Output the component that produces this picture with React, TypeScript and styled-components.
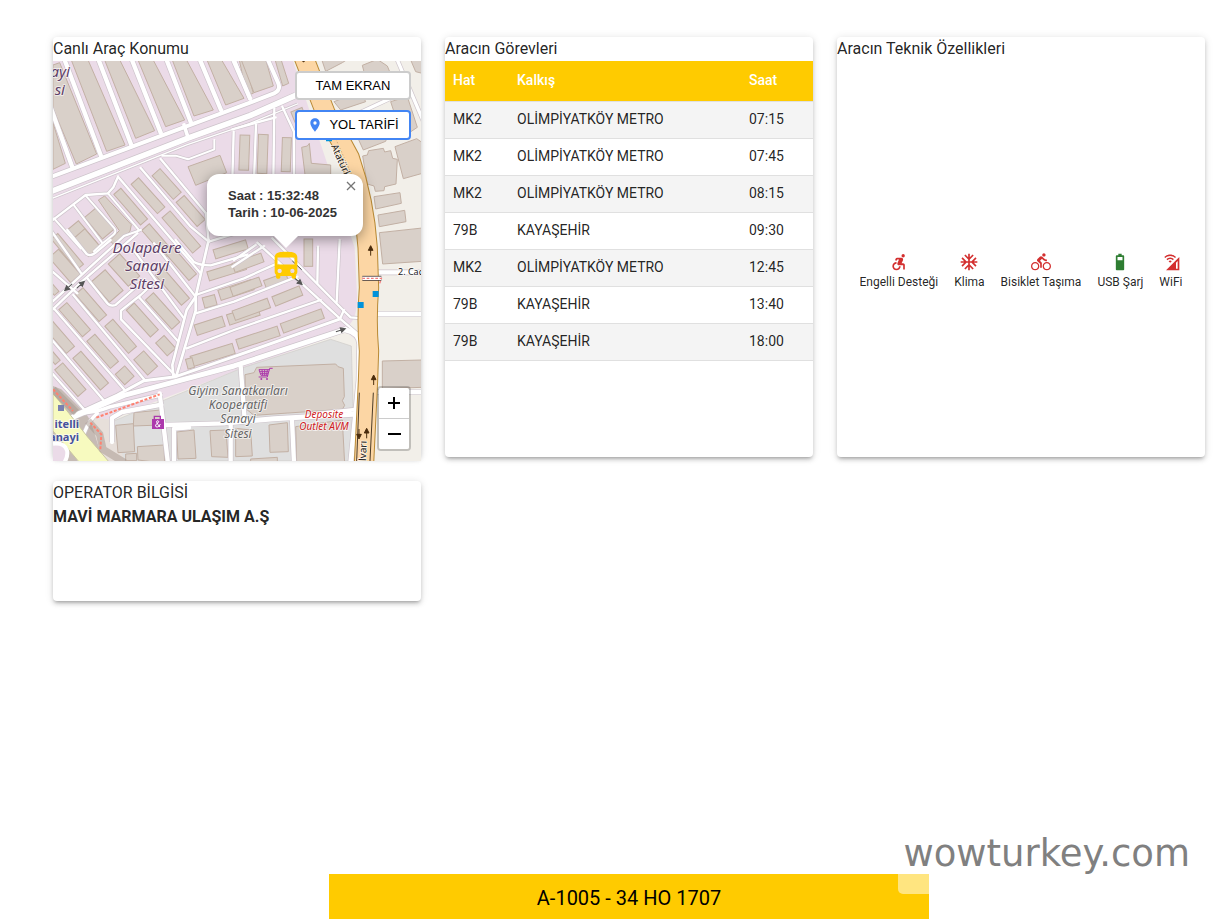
import React from 'react';
import styled, { createGlobalStyle } from 'styled-components';
import {
  MdAccessibleForward,
  MdAcUnit,
  MdDirectionsBike,
  MdCellWifi,
  MdDirectionsBus,
  MdLocationOn,
} from 'react-icons/md';

const GlobalStyle = createGlobalStyle`
  *, *::before, *::after { box-sizing: border-box; }
  body {
    margin: 0;
    background: #fff;
    color: rgba(0, 0, 0, 0.87);
    font-family: Roboto, "Liberation Sans", sans-serif;
    font-size: 16px;
    line-height: 24px;
  }
`;

const Page = styled.div`
  position: relative;
  display: flex;
  flex-direction: column;
  min-height: 100vh;
  padding: 37px 13px 0 53px;
`;

const Cards = styled.main`
  display: grid;
  grid-template-columns: repeat(3, minmax(0, 1fr));
  align-items: start;
  gap: 24px;
  margin-bottom: 24px;
`;

const Card = styled.section<{ $height: number }>`
  display: flex;
  flex-direction: column;
  height: ${(p) => p.$height}px;
  background: #fff;
  border-radius: 4px;
  box-shadow: 0 3px 3px -2px rgba(0, 0, 0, 0.2), 0 3px 4px 0 rgba(0, 0, 0, 0.14),
    0 1px 8px 0 rgba(0, 0, 0, 0.12);
`;

const CardTitle = styled.h2`
  margin: 0;
  font-size: 16px;
  line-height: 24px;
  font-weight: 400;
`;

const Operator = styled.strong`
  font-weight: 700;
`;

/* ---------- map ---------- */

const MapBox = styled.div`
  position: relative;
  flex: none;
  height: 400px;
  overflow: hidden;
  font-family: "Liberation Sans", Arial, sans-serif;
`;

const MapDrawing = styled.svg`
  display: block;
  width: 100%;
  height: 100%;
`;

const MapActions = styled.div`
  position: absolute;
  top: 10px;
  right: 10px;
  display: flex;
  flex-direction: column;
  gap: 10px;
  width: 116px;
`;

const MapButton = styled.button<{ $primary?: boolean }>`
  display: flex;
  align-items: center;
  justify-content: center;
  gap: 6px;
  height: ${(p) => (p.$primary ? 30 : 29)}px;
  padding: 0;
  border: 2px solid ${(p) => (p.$primary ? '#4285f4' : '#ccc')};
  border-radius: 4px;
  background: #fff;
  color: #000;
  font-family: inherit;
  font-size: 13px;
  line-height: 16px;
  cursor: pointer;

  svg {
    color: #4285f4;
  }
`;

const Zoom = styled.div`
  position: absolute;
  right: 10px;
  bottom: 10px;
  width: 34px;
  border: 2px solid rgba(0, 0, 0, 0.2);
  border-radius: 4px;
  background-clip: padding-box;
`;

const ZoomButton = styled.button`
  display: flex;
  align-items: center;
  justify-content: center;
  width: 30px;
  height: 30px;
  padding: 0;
  border: 0;
  background: #fff;
  color: #000;
  cursor: pointer;

  &:first-child {
    height: 31px;
    border-bottom: 1px solid #ccc;
    border-radius: 2px 2px 0 0;
  }
  &:last-child {
    border-radius: 0 0 2px 2px;
  }
`;

const Marker = styled.div`
  position: absolute;
  top: 188px;
  left: calc(50% + 32px);
  height: 34px;
  color: #ffcb00;
`;

const Popup = styled.div`
  position: absolute;
  top: 113px;
  left: calc(50% - 30px);
  width: 156px;
  height: 62px;
  padding: 13px 21px;
  border-radius: 12px;
  background: #fff;
  box-shadow: 0 3px 14px rgba(0, 0, 0, 0.4);
  color: #333;
  font-size: 13px;
  line-height: 17px;
  font-weight: 700;
  white-space: nowrap;
`;

const PopupTip = styled.svg`
  position: absolute;
  top: 174px;
  left: calc(50% + 35px);
`;

const PopupClose = styled.button`
  position: absolute;
  top: 0;
  right: 0;
  width: 24px;
  height: 24px;
  padding: 0;
  border: 0;
  background: none;
  color: #757575;
  line-height: 0;
  cursor: pointer;
`;

type Tile = 'nw' | 'ne' | 'sw' | 'se';
type Road = [Tile, number, string];
type Block = [Tile, number, number, number, number, number];

const SHIFT: Record<Tile, string> = {
  nw: 'translate(-27 -93)',
  ne: 'translate(543 -93)',
  sw: 'translate(-27 537)',
  se: 'translate(543 537)',
};

// Streets: tile, width, path
const ROADS: Road[] = [
  ['nw', 12, 'M10 205L85 412'],
  ['nw', 12, 'M60 85L172 380'],
  ['nw', 12, 'M162 85L262 345'],
  ['nw', 12, 'M262 85L350 308'],
  ['nw', 12, 'M366 85L440 275'],
  ['nw', 12, 'M466 85L531 240'],
  ['nw', 12, 'M566 85L618 205'],
  ['nw', 11, 'M20 441L618 218L690 190Q712 180 702 158L670 85'],
  ['nw', 16, 'M20 485L430 325L618 257L755 196'],
  ['nw', 3, 'M20 507L430 344L618 280L760 222'],
  ['nw', 10, 'M420 285L433 325'],
  ['nw', 5, 'M355 377L395 377L432 388L511 358L511 330'],
  ['nw', 6, 'M569 305L565 450'],
  ['nw', 6, 'M350 387L486 550'],
  ['nw', 6, 'M290 414L440 590L494 635L610 600'],
  ['nw', 6, 'M222 440L470 730'],
  ['nw', 6, 'M222 440L208 472L192 490L125 495L20 575'],
  ['nw', 5, 'M125 497L212 596Q218 606 208 614L178 638'],
  ['nw', 5, 'M90 526L176 640L150 664'],
  ['nw', 5, 'M192 490L285 600'],
  ['nw', 5, 'M30 565L110 655'],
  ['nw', 6, 'M494 635L486 550'],
  ['ne', 9, 'M0 88L48 207'],
  ['ne', 6, 'M121 236L118 450'],
  ['ne', 6, 'M66 285L60 450'],
  ['ne', 6, 'M-5 298L125 262'],
  ['ne', 6, 'M145 230L180 305L180 450'],
  ['ne', 9, 'M488 85L575 290'],
  ['ne', 9, 'M330 270L480 200'],
  ['ne', 6, 'M65 645L0 690'],
  ['sw', 7, 'M494 0L455 170L428 210L385 375L388 408'],
  ['sw', 7, 'M455 165L455 212L397 408'],
  ['sw', 6, 'M20 190L240 -12L290 -30'],
  ['sw', 6, 'M20 214L110 128L280 -20'],
  ['sw', 6, 'M20 -30L112 100'],
  ['sw', 6, 'M70 -30L128 42Q140 50 155 38L200 0'],
  ['sw', 6, 'M32 208L240 448'],
  ['sw', 6, 'M88 165L302 420'],
  ['sw', 6, 'M130 115L190 190Q200 200 215 195L300 120'],
  ['sw', 6, 'M395 408L231 238L231 212L290 165L330 128'],
  ['sw', 6, 'M285 172L402 304'],
  ['sw', 6, 'M265 25L420 235'],
  ['sw', 6, 'M330 10L455 170'],
  ['sw', 6, 'M395 0L450 66Q465 76 500 76L610 44'],
  ['sw', 6, 'M20 295L180 482'],
  ['sw', 6, 'M20 395L120 508'],
  ['sw', 6, 'M20 90L100 160'],
  ['sw', 6, 'M455 165L600 115L700 70'],
  ['sw', 6, 'M455 220L570 185L760 110'],
  ['sw', 6, 'M428 325L570 270L830 180'],
  ['sw', 8, 'M100 520L220 465L300 422L395 410L570 350L885 238'],
  ['sw', 14, 'M85 532L240 466L570 378L905 268'],
  ['sw', 12, 'M347 460L372 670'],
  ['sw', 12, 'M204 606L204 534L235 516L352 494'],
  ['sw', 10, 'M100 520Q150 520 200 500L350 465'],
  ['sw', 12, 'M365 555L540 550L560 545'],
  ['sw', 12, 'M390 670L390 566L435 562'],
  ['sw', 9, 'M105 670Q110 560 160 520'],
  ['se', 6, 'M70 8L318 236L384 292'],
  ['se', 6, 'M115 -5L330 213L350 232L388 235'],
  ['se', 6, 'M330 210L318 236'],
  ['se', 6, 'M-5 80L90 18'],
  ['se', 6, 'M252 20L250 130'],
  ['se', 6, 'M317 0L308 186'],
  ['se', 14, 'M335 270Q375 278 377 312L375 420L350 670'],
  ['se', 12, 'M20 380L32 538'],
  ['se', 14, 'M-15 548L120 536L370 522'],
  ['se', 10, 'M240 522L370 508'],
  ['se', 12, 'M174 540L180 670'],
  ['se', 12, 'M-10 545L-10 670'],
  ['se', 12, 'M425 97L575 97'],
  ['se', 12, 'M425 222L575 222'],
  ['se', 12, 'M425 456L575 456'],
];

// Rectangular buildings: tile, centre x, centre y, length, depth, angle
const BLOCKS: Block[] = [
  ['nw', 368, 462, 95, 32, 48],
  ['nw', 312, 497, 118, 30, 48],
  ['nw', 260, 530, 122, 28, 49],
  ['nw', 440, 543, 96, 32, 49],
  ['nw', 412, 606, 140, 32, 49],
  ['nw', 340, 632, 108, 30, 49],
  ['nw', 166, 580, 84, 46, 50],
  ['nw', 116, 620, 90, 42, 50],
  ['nw', 70, 665, 120, 26, 50],
  ['ne', 31, 368, 105, 29, 92],
  ['ne', 86, 372, 117, 29, 92],
  ['ne', 157, 374, 102, 27, 92],
  ['ne', 194, 256, 36, 36, -22],
  ['sw', 190, 138, 82, 54, 49],
  ['sw', 141, 194, 108, 30, 49],
  ['sw', 92, 239, 108, 32, 49],
  ['sw', 45, 290, 105, 32, 49],
  ['sw', 230, 289, 108, 32, 49],
  ['sw', 176, 334, 108, 32, 49],
  ['sw', 140, 392, 126, 32, 49],
  ['sw', 79, 419, 106, 32, 49],
  ['sw', 295, 240, 108, 32, 48],
  ['sw', 356, 213, 118, 32, 48],
  ['sw', 365, 317, 52, 34, 48],
  ['sw', 305, 369, 62, 40, 48],
  ['sw', 242, 406, 42, 38, 48],
  ['sw', 240, 90, 90, 46, 48],
  ['sw', 385, 140, 120, 32, 49],
  ['sw', 410, 70, 110, 30, 49],
  ['sw', 128, 8, 70, 46, 49],
  ['sw', 62, 78, 100, 38, 49],
  ['sw', 25, 145, 40, 18, 49],
  ['sw', 28, 352, 40, 20, 49],
  ['sw', 560, 28, 102, 28, -17],
  ['sw', 548, 92, 116, 28, -17],
  ['sw', 497, 184, 38, 32, -15],
  ['sw', 576, 150, 104, 32, -18],
  ['sw', 497, 257, 88, 32, -18],
  ['sw', 598, 225, 96, 32, -18],
  ['sw', 506, 345, 132, 32, -17],
  ['sw', 438, 370, 20, 30, -15],
  ['se', 42, 68, 92, 28, -20],
  ['se', 36, 140, 92, 28, -20],
  ['se', 126, 122, 70, 26, -20],
  ['se', 52, 208, 112, 30, -20],
  ['se', 160, 168, 88, 30, -22],
  ['se', 72, 293, 130, 30, -18],
  ['se', 205, 243, 130, 30, -20],
  ['se', 223, 38, 82, 26, 90],
];

// Buildings with an irregular outline
const SHAPES: [Tile, string][] = [
  ['nw', '27,105 47,98 158,372 97,402 27,235'],
  ['nw', '27,278 64,400 27,418'],
  ['nw', '80,85 130,85 243,345 188,364'],
  ['nw', '180,85 225,85 332,302 275,325'],
  ['nw', '280,85 325,85 422,270 365,290'],
  ['nw', '383,85 425,85 508,240 450,258'],
  ['nw', '487,85 530,85 600,205 545,225'],
  ['nw', '585,85 600,85 628,190 608,196'],
  ['nw', '432,410 528,376 548,428 455,466'],
  ['nw', '163,510 182,498 262,584 258,604 212,646 198,632 226,602'],
  ['ne', '20,85 94,85 118,168 60,188'],
  ['ne', '122,85 140,85 164,160 146,168'],
  ['ne', '203,352 220,348 226,340 232,400 290,405 290,450 215,450'],
  ['ne', '262,85 345,85 325,98 275,124'],
  ['ne', '385,106 430,88 460,108 474,142 400,165'],
  ['ne', '528,85 565,85 565,130 545,125'],
  ['ne', '470,215 520,200 550,292 505,322'],
  ['ne', '300,215 380,185 395,215 320,240'],
  ['ne', '372,325 460,320 455,334 388,360'],
  ['ne', '386,378 400,375 404,362 448,355 452,366 470,362 476,385 490,388 486,462 452,470 450,482 424,484 420,468 400,462 396,440'],
  ['ne', '483,350 548,326 565,338 565,430 508,446'],
  ['ne', '420,500 498,488 502,520 425,537'],
  ['ne', '432,555 512,541 516,575 436,590'],
  ['ne', '436,608 565,594 565,694 446,702'],
  ['se', '445,363 565,360 565,442 445,446'],
  ['se', '68,382 305,372 312,380 328,385 331,470 325,482 332,496 325,508 60,526 35,506 33,404 60,398'],
  ['se', '5,565 50,570 55,648 5,650'],
  ['se', '105,555 160,548 163,635 108,637'],
  ['se', '185,560 325,540 332,670 188,670'],
  ['se', '50,657 130,652 130,670 50,670'],
  ['sw', '270,518 350,510 352,555 268,558'],
  ['sw', '215,556 268,551 272,635 222,638'],
  ['sw', '280,620 360,615 362,670 282,660'],
  ['sw', '245,642 278,640 278,662 245,662'],
  ['sw', '398,576 450,570 456,655 402,657'],
  ['sw', '498,572 546,570 552,652 503,650'],
];

const BOULEVARD = 'M745 -30L818 157L890 290Q935 420 944 560L948 680Q940 780 948 870L945 960L932 1230';

const ARROW_UP = 'M0 14V-8M0 -16L-7 -2L7 -2Z';

const CityMap = () => (
  <MapDrawing viewBox="0 0 368 400" preserveAspectRatio="xMidYMid slice" aria-label="Harita">
    <rect width="368" height="400" fill="#ebdbe8" />
    <g transform="scale(0.33333)">
      <path d="M720 0L1104 0V1200H895L920 850L885 795Q915 770 912 700L905 560L830 330Z" fill="#f2efe9" />
      <path d="M130 1090L560 925L880 812L925 850L900 1200H60Z" fill="#f2efe9" />
      <path d="M170 1085L570 920L833 835L895 855L905 1200H170Z" fill="#dfdfdf" stroke="#cfcbc8" strokeWidth="2" />
      <path d="M0 975L25 985L100 1060L190 1200L0 1200Z" fill="#c6bbb5" />
      <path d="M110 1070L170 1075L215 1200H150Z" fill="#e7dfda" />

      <g fill="#d9d0c9" stroke="#c2b0a4" strokeWidth="3">
        {BLOCKS.map(([tile, cx, cy, w, h, a], i) => (
          <g key={i} transform={SHIFT[tile]}>
            <rect x={cx - w / 2} y={cy - h / 2} width={w} height={h} transform={`rotate(${a} ${cx} ${cy})`} />
          </g>
        ))}
        {SHAPES.map(([tile, points], i) => (
          <polygon key={i} points={points} transform={SHIFT[tile]} />
        ))}
      </g>

      <g fill="none" stroke="#cdc4cb" strokeLinejoin="round">
        {ROADS.map(([tile, w, d], i) => (
          <path key={i} d={d} strokeWidth={w + 5} transform={SHIFT[tile]} />
        ))}
      </g>
      <g fill="none" stroke="#fff" strokeLinejoin="round" strokeLinecap="round">
        {ROADS.map(([tile, w, d], i) => (
          <path key={i} d={d} strokeWidth={w + 1} transform={SHIFT[tile]} />
        ))}
      </g>

      <path d="M0 997L48 1057L103 1127L170 1205H80L0 1110Z" fill="#f7fabf" stroke="#c9c6a2" strokeWidth="3" />
      <path d="M0 985L70 1055M105 1080L140 1120L150 1165L215 1205" fill="none" stroke="#a5958c" strokeWidth="22" opacity="0.5" />
      <path d="M0 985L60 1050M112 1085L145 1120L142 1165M130 1070L320 1000" fill="none" stroke="#ff8170" strokeWidth="6" strokeDasharray="9 5" />
      <path d="M0 1150Q30 1148 38 1168Q42 1185 30 1205H0Z" fill="#ebdbe8" />
      <path d="M0 1148Q34 1144 42 1168Q46 1185 34 1205" fill="none" stroke="#fff" strokeWidth="12" />

      <path d={BOULEVARD} fill="none" stroke="#b98a35" strokeWidth="61" />
      <path d={BOULEVARD} fill="none" stroke="#fcd6a4" strokeWidth="55" />
      <path d="M840 215L900 350" fill="none" stroke="#b99b70" strokeWidth="2" strokeDasharray="5 5" />
      <path d="M919 995L911 1200M961 995L951 1200" fill="none" stroke="#4a3b28" strokeWidth="3" />

      <path d="M928 652H985" stroke="#4b4344" strokeWidth="15" />
      <path d="M928 652H985" stroke="#fff" strokeWidth="10" />
      <path d="M928 652H985L980 668" fill="none" stroke="#f47b7b" strokeWidth="4" strokeDasharray="8 5" />
      <path d="M914 723h18v18h-18ZM959 690h18v18h-18ZM819 227h18v14h-18Z" fill="#0092da" />

      <g stroke="#4a2c0c" fill="#4a2c0c" strokeWidth="3">
        <path d={ARROW_UP} transform="translate(953 570)" />
        <path d={ARROW_UP} transform="translate(962 958)" />
        <path d={ARROW_UP} transform="translate(941 1118)" />
        <path d={ARROW_UP} transform="translate(918 1118) rotate(180)" />
        <path d="M744 -4L752 3L758 -4Z" />
      </g>
      <g stroke="#555" fill="#555" strokeWidth="3">
        <path d={ARROW_UP} transform="translate(82 672) rotate(48)" />
        <path d={ARROW_UP} transform="translate(47 678) rotate(228)" />
        <path d={ARROW_UP} transform="translate(862 808) rotate(72)" />
        <path d={ARROW_UP} transform="translate(735 660) rotate(130)" />
        <path d="M718 600L746 626" />
      </g>

      <rect x="15" y="1032" width="18" height="18" fill="#7981b0" />
      <path d="M304 1078v-12h18v12" fill="none" stroke="#ac39ac" strokeWidth="4" />
      <rect x="297" y="1074" width="36" height="30" fill="#ac39ac" />
      <path d="M321 1098Q305 1080 314 1079Q322 1082 311 1088Q303 1098 313 1098Q320 1096 322 1089" fill="none" stroke="#fff" strokeWidth="3" />
      <path d="M659 922h-9l-7 26h-26M650 926h-32l6 17h21M627 926l2 17M635 926v17M643 926l-2 17M620 932h27M622 938h23" fill="none" stroke="#ac39ac" strokeWidth="3" />
      <circle cx="625" cy="954" r="3" fill="#ac39ac" />
      <circle cx="642" cy="954" r="3" fill="#ac39ac" />
    </g>

    <g
      fontFamily='"Noto Sans", sans-serif'
      textAnchor="middle"
      stroke="#fff"
      strokeOpacity="0.6"
      strokeWidth="2"
      paintOrder="stroke"
      strokeLinejoin="round"
    >
      <g fontSize="15" fontStyle="italic" fill="#5f4067">
        <text x="94" y="192">Dolapdere</text>
        <text x="94" y="210">Sanayi</text>
        <text x="94" y="228">Sitesi</text>
        <text x="17" y="16" textAnchor="end">ayi</text>
        <text x="12" y="34" textAnchor="end">si</text>
      </g>
      <g fontSize="12" fontStyle="italic" fill="#666">
        <text x="185" y="334">Giyim Sanatkarları</text>
        <text x="185" y="348">Kooperatifi</text>
        <text x="185" y="362">Sanayi</text>
        <text x="185" y="377">Sitesi</text>
      </g>
      <g fontSize="10" fontStyle="italic" fill="#d0201c">
        <text x="271" y="357">Deposite</text>
        <text x="271" y="369">Outlet AVM</text>
      </g>
      <g fontSize="11" fontWeight="700" fill="#46519c">
        <text x="26" y="367" textAnchor="end">itelli</text>
        <text x="26" y="380" textAnchor="end">anayi</text>
      </g>
      <g fontSize="9" fill="#222">
        <text x="345" y="214" textAnchor="start">2. Cad</text>
        <text fontSize="10" textAnchor="start" transform="translate(278 85) rotate(66)">Atatürk</text>
        <text fontSize="10" textAnchor="start" transform="translate(313 400) rotate(-88)">lvarı</text>
      </g>
    </g>
  </MapDrawing>
);

/* ---------- duty table ---------- */

const Table = styled.table`
  width: 100%;
  border-collapse: collapse;
  table-layout: fixed;
  font-size: 14px;
  line-height: 20px;
  text-align: left;
`;

const LineCol = styled.col`
  width: 64px;
`;

const TimeCol = styled.col`
  width: 72px;
`;

const HeadCell = styled.th`
  height: 40px;
  padding: 0 8px 2px;
  background: #ffcb00;
  border-bottom: 1px solid #e0e0e0;
  color: #fff;
  font-weight: 500;
`;

const BodyRow = styled.tr`
  &:nth-child(odd) {
    background: #f4f4f4;
  }
`;

const BodyCell = styled.td`
  height: 37px;
  padding: 0 8px 2px;
  border-bottom: 1px solid #e0e0e0;
`;

const DUTIES = [
  ['MK2', 'OLİMPİYATKÖY METRO', '07:15'],
  ['MK2', 'OLİMPİYATKÖY METRO', '07:45'],
  ['MK2', 'OLİMPİYATKÖY METRO', '08:15'],
  ['79B', 'KAYAŞEHİR', '09:30'],
  ['MK2', 'OLİMPİYATKÖY METRO', '12:45'],
  ['79B', 'KAYAŞEHİR', '13:40'],
  ['79B', 'KAYAŞEHİR', '18:00'],
];

/* ---------- features ---------- */

const Features = styled.ul`
  flex: 1;
  display: flex;
  align-items: center;
  justify-content: center;
  gap: 16px;
  margin: 0;
  padding: 26px 0 0;
  list-style: none;
`;

const Feature = styled.li<{ $on?: boolean }>`
  display: flex;
  flex-direction: column;
  align-items: center;
  font-size: 12px;
  line-height: 20px;
  white-space: nowrap;

  svg {
    color: ${(p) => (p.$on ? '#2e7d32' : '#d32f2f')};
  }
`;

const BatteryIcon = ({ size }: { size: number }) => (
  <svg width={size} height={size} viewBox="0 0 24 24" fill="currentColor" fillRule="evenodd">
    <path d="M16 4h-2V2h-4v2H8a1 1 0 0 0-1 1v16a1 1 0 0 0 1 1h8a1 1 0 0 0 1-1V5a1 1 0 0 0-1-1ZM9 6h6v4H9Z" />
  </svg>
);

const FEATURES = [
  { label: 'Engelli Desteği', Icon: MdAccessibleForward },
  { label: 'Klima', Icon: MdAcUnit },
  { label: 'Bisiklet Taşıma', Icon: MdDirectionsBike },
  { label: 'USB Şarj', Icon: BatteryIcon, on: true },
  { label: 'WiFi', Icon: MdCellWifi },
];

/* ---------- footer ---------- */

const Footer = styled.footer`
  width: 100%;
  max-width: 600px;
  margin: auto auto 0;
  padding: 9px 0 6px;
  background: #ffcb00;
  color: #000;
  font-size: 20px;
  line-height: 30px;
  text-align: center;
`;

const SiteMark = styled.div`
  position: absolute;
  right: 23px;
  bottom: 25px;
  padding: 0 5px 16px;
  border-radius: 5px;
  background: rgba(255, 255, 255, 0.5);
  color: #808080;
  font-family: "DejaVu Sans", Verdana, sans-serif;
  font-size: 37px;
  line-height: 48px;
`;

export default function App() {
  return (
    <>
      <GlobalStyle />
      <Page>
        <Cards>
          <Card $height={420}>
            <CardTitle>Canlı Araç Konumu</CardTitle>
            <MapBox>
              <CityMap />
              <Marker>
                <MdDirectionsBus size={34} />
              </Marker>
              <Popup>
                Saat : 15:32:48
                <br />
                Tarih : 10-06-2025
                <PopupClose type="button" aria-label="Kapat">
                  <svg width="10" height="10" viewBox="0 0 10 10" stroke="currentColor" strokeWidth="1.3">
                    <path d="M1 1L9 9M9 1L1 9" />
                  </svg>
                </PopupClose>
              </Popup>
              <PopupTip width="28" height="14" viewBox="0 0 28 14" fill="#fff">
                <path d="M1 0H27L14 13Z" />
              </PopupTip>
              <MapActions>
                <MapButton type="button">TAM EKRAN</MapButton>
                <MapButton type="button" $primary>
                  <MdLocationOn size={16} />
                  YOL TARİFİ
                </MapButton>
              </MapActions>
              <Zoom>
                <ZoomButton type="button" aria-label="Yakınlaştır">
                  <svg width="12" height="12" viewBox="0 0 12 12" stroke="currentColor" strokeWidth="2">
                    <path d="M0 6H12M6 0V12" />
                  </svg>
                </ZoomButton>
                <ZoomButton type="button" aria-label="Uzaklaştır">
                  <svg width="14" height="12" viewBox="0 0 14 12" stroke="currentColor" strokeWidth="2">
                    <path d="M1 6H14" />
                  </svg>
                </ZoomButton>
              </Zoom>
            </MapBox>
          </Card>

          <Card $height={420}>
            <CardTitle>Aracın Görevleri</CardTitle>
            <Table>
              <colgroup>
                <LineCol />
                <col />
                <TimeCol />
              </colgroup>
              <thead>
                <tr>
                  <HeadCell scope="col">Hat</HeadCell>
                  <HeadCell scope="col">Kalkış</HeadCell>
                  <HeadCell scope="col">Saat</HeadCell>
                </tr>
              </thead>
              <tbody>
                {DUTIES.map(([line, start, time]) => (
                  <BodyRow key={time}>
                    <BodyCell>{line}</BodyCell>
                    <BodyCell>{start}</BodyCell>
                    <BodyCell>{time}</BodyCell>
                  </BodyRow>
                ))}
              </tbody>
            </Table>
          </Card>

          <Card $height={420}>
            <CardTitle>Aracın Teknik Özellikleri</CardTitle>
            <Features>
              {FEATURES.map(({ label, Icon, on }) => (
                <Feature key={label} $on={on}>
                  <Icon size={20} />
                  {label}
                </Feature>
              ))}
            </Features>
          </Card>

          <Card $height={120}>
            <CardTitle>OPERATOR BİLGİSİ</CardTitle>
            <Operator>MAVİ MARMARA ULAŞIM A.Ş</Operator>
          </Card>
        </Cards>

        <Footer>A-1005 - 34 HO 1707</Footer>
        <SiteMark>wowturkey.com</SiteMark>
      </Page>
    </>
  );
}
